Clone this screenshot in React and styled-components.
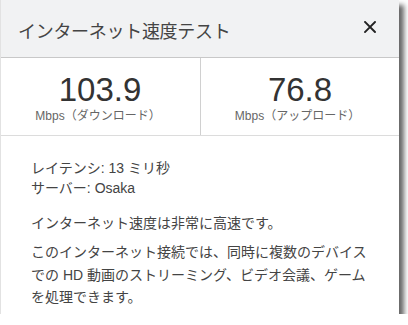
import React from 'react';
import styled, { createGlobalStyle } from 'styled-components';

const GlobalStyle = createGlobalStyle`
  html, body {
    margin: 0;
    padding: 0;
    background: #fff;
  }
  body {
    font-family: "Liberation Sans", Arial, "Noto Sans CJK JP", sans-serif;
  }
`;

const Card = styled.div`
  width: 398px;
  height: 314px;
  background: #fff;
  border-left: 1px solid #e2e2e2;
  box-shadow: 5px 5px 5px rgba(0, 0, 0, 0.6);
  display: flex;
  flex-direction: column;
  overflow: hidden;
`;

const Header = styled.header`
  height: 57px;
  flex-shrink: 0;
  background: #f1f2f3;
  border-bottom: 1px solid #c8c8c8;
  display: flex;
  align-items: center;
  justify-content: space-between;
  padding: 0 22px 0 17px;
`;

const Title = styled.h2`
  margin: 2px 0 0;
  font-size: 18px;
  font-weight: normal;
  color: #444;
  letter-spacing: -0.3px;
`;

const CloseButton = styled.button`
  background: none;
  border: none;
  padding: 0;
  width: 14px;
  height: 14px;
  display: flex;
  align-items: center;
  justify-content: center;
  margin-top: -3px;
  cursor: pointer;
`;

const Stats = styled.div`
  display: grid;
  grid-template-columns: 1fr 1fr;
  border-bottom: 1px solid #dcdcdc;
  flex-shrink: 0;
`;

const Stat = styled.div`
  display: flex;
  flex-direction: column;
  align-items: center;
  padding: 13px 0 11px;
  border-left: ${(p) => (p.$divided ? '1px solid #d0d0d0' : 'none')};
`;

const Value = styled.div`
  font-size: 33px;
  line-height: 37px;
  color: #333;
  margin-left: ${(p) => p.$shift || 0}px;
`;

const Unit = styled.div`
  font-size: 12px;
  line-height: 16px;
  color: #666;
  margin-left: -5px;
`;

const Body = styled.div`
  padding: 22px 29px 0 30px;
  color: #444;
  font-size: 14px;
`;

const Info = styled.div`
  line-height: 20px;
`;

const Para = styled.p`
  margin: ${(p) => p.$gap}px 0 0;
  line-height: ${(p) => p.$lh}px;
`;

function CloseIcon() {
  return (
    <svg width="12" height="12" viewBox="0 0 12 12">
      <path d="M1 1 L11 11 M11 1 L1 11" stroke="#222" strokeWidth="1.9" strokeLinecap="square" />
    </svg>
  );
}

export default function App() {
  return (
    <>
      <GlobalStyle />
      <Card>
        <Header>
          <Title>インターネット速度テスト</Title>
          <CloseButton aria-label="閉じる">
            <CloseIcon />
          </CloseButton>
        </Header>

        <Stats>
          <Stat>
            <Value $shift={-1}>103.9</Value>
            <Unit>Mbps（ダウンロード）</Unit>
          </Stat>
          <Stat $divided>
            <Value>76.8</Value>
            <Unit>Mbps（アップロード）</Unit>
          </Stat>
        </Stats>

        <Body>
          <Info>
            <div>レイテンシ: 13 ミリ秒</div>
            <div>サーバー: Osaka</div>
          </Info>
          <Para $gap={14} $lh={22}>インターネット速度は非常に高速です。</Para>
          <Para $gap={7} $lh={22.5}>
            このインターネット接続では、同時に複数のデバイスでの HD 動画のストリーミング、ビデオ会議、ゲームを処理できます。
          </Para>
        </Body>
      </Card>
    </>
  );
}
